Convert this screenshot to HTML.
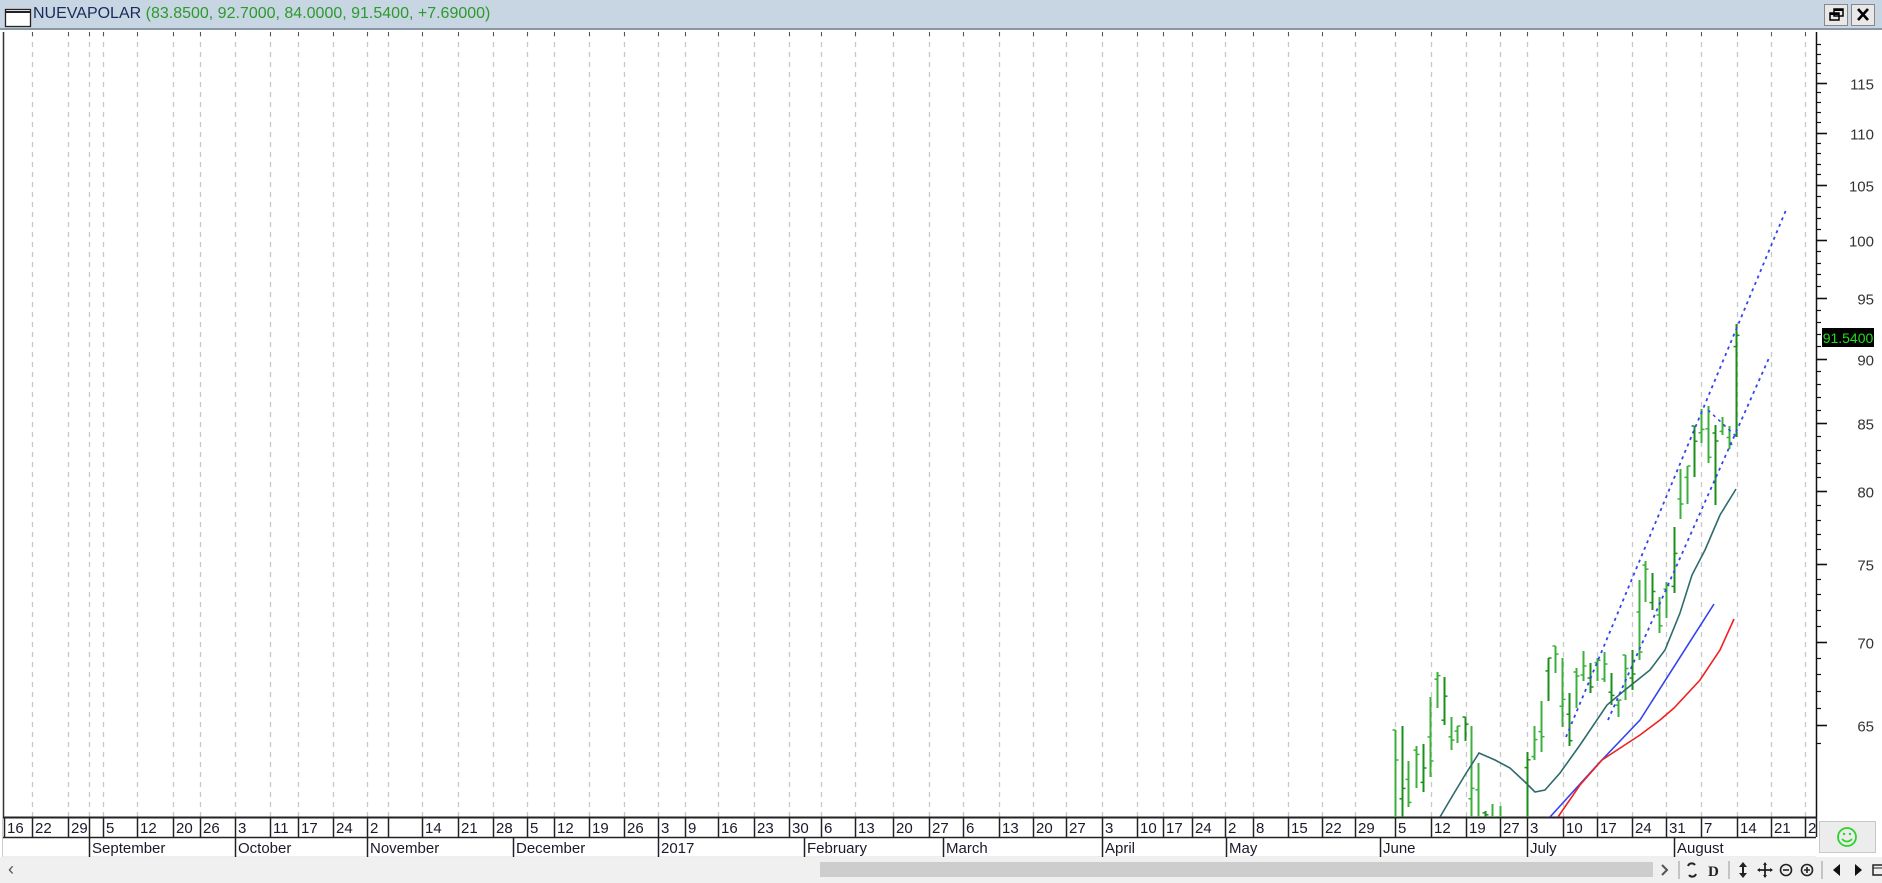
<!DOCTYPE html>
<html><head><meta charset="utf-8">
<style>
html,body{margin:0;padding:0;width:1882px;height:883px;overflow:hidden;background:#fff;font-family:"Liberation Sans",Arial,sans-serif;}
#wrap{position:relative;width:1882px;height:883px;}
#title{position:absolute;left:0;top:0;width:1882px;height:30px;background:#c8d6e3;border-bottom:2px solid #8a98a6;box-sizing:border-box;}
#title .t{position:absolute;left:33px;top:5px;font-size:16px;color:#1a2a5a;white-space:nowrap;}
#title .t span{color:#2a9a2a;}
.btn{position:absolute;top:4px;width:24px;height:22px;background:#e8e8e8;border:1px solid #888;box-sizing:border-box;}
#scroll{position:absolute;left:0;top:857px;width:1882px;height:26px;background:#f0f0f0;}
#smile{position:absolute;left:1819px;top:821px;width:57px;height:32px;background:#ececec;border:1px solid #c8c8c8;box-sizing:border-box;}
</style></head><body><div id="wrap">
<svg id="s" width="1882" height="883" style="position:absolute;left:0;top:0" font-family="Liberation Sans, Arial, sans-serif"></svg>
<div id="title">
<svg width="28" height="24" style="position:absolute;left:4px;top:4px"><rect x="1.5" y="5.5" width="25" height="17" fill="#fff" stroke="#222" stroke-width="1.3"/><line x1="1.5" y1="8" x2="26.5" y2="8" stroke="#222" stroke-width="2"/></svg>
<div class="t">NUEVAPOLAR <span>(83.8500, 92.7000, 84.0000, 91.5400, +7.69000)</span></div>
<div class="btn" style="left:1824px"><svg width="22" height="20"><rect x="5" y="8" width="9" height="7" fill="none" stroke="#000" stroke-width="1.5"/><rect x="9" y="4" width="9" height="7" fill="none" stroke="#000" stroke-width="1.5"/><line x1="9" y1="5" x2="18" y2="5" stroke="#000" stroke-width="2"/><line x1="5" y1="9" x2="14" y2="9" stroke="#000" stroke-width="2"/></svg></div>
<div class="btn" style="left:1851px"><svg width="22" height="20"><path d="M6 4 L16 15 M16 4 L6 15" stroke="#000" stroke-width="2.6"/></svg></div>
</div>
<div id="scroll">
<div style="position:absolute;left:8px;top:2px;font-size:18px;color:#555">‹</div>
<div style="position:absolute;left:820px;top:5px;width:833px;height:15px;background:#cdcdcd"></div>
<svg width="230" height="26" style="position:absolute;left:1652px;top:0">
<path d="M10 8 L15 13 L10 18" fill="none" stroke="#555" stroke-width="2"/>
<line x1="27" y1="4" x2="27" y2="22" stroke="#999"/>
<path d="M36 9 a4 4 0 0 1 7 -1 M44 17 a4 4 0 0 1 -7 1" fill="none" stroke="#222" stroke-width="2"/>
<text x="56" y="19" font-size="15" font-weight="bold" fill="#222" font-family="Liberation Serif, serif">D</text>
<line x1="77" y1="4" x2="77" y2="22" stroke="#999"/>
<path d="M91 5 L95 10 L87 10 Z M91 21 L95 16 L87 16 Z M90 10 h2 v6 h-2z" fill="#222"/>
<path d="M113 6 v14 M106 13 h14" stroke="#222" stroke-width="1.8"/><path d="M113 5 l-2 3 h4z M113 21 l-2 -3 h4z M105 13 l3 -2 v4z M121 13 l-3 -2 v4z" fill="#222"/>
<circle cx="134" cy="13" r="5.5" fill="none" stroke="#222" stroke-width="1.6"/><line x1="131" y1="13" x2="137" y2="13" stroke="#222" stroke-width="1.6"/>
<circle cx="155" cy="13" r="5.5" fill="none" stroke="#222" stroke-width="1.6"/><path d="M152 13 h6 M155 10 v6" stroke="#222" stroke-width="1.6"/>
<line x1="170" y1="4" x2="170" y2="22" stroke="#999"/>
<path d="M188 7 L181 13 L188 19 Z" fill="#111"/><path d="M203 7 L210 13 L203 19 Z" fill="#111"/>
<rect x="221" y="8" width="10" height="10" fill="none" stroke="#222" stroke-width="1.5"/><line x1="221" y1="11" x2="231" y2="11" stroke="#222"/>
</svg>
</div>
<div id="smile"><svg width="55" height="30"><circle cx="27" cy="15" r="9" fill="none" stroke="#2ad42a" stroke-width="1.8"/><circle cx="24" cy="12" r="1.2" fill="#2ad42a"/><circle cx="30" cy="12" r="1.2" fill="#2ad42a"/><path d="M22 17 q5 5 10 0" fill="none" stroke="#2ad42a" stroke-width="1.6"/></svg></div>
</div>
<script>
var s='';
function L(x1,y1,x2,y2,c,w,d){s+='<line x1="'+x1+'" y1="'+y1+'" x2="'+x2+'" y2="'+y2+'" stroke="'+c+'" stroke-width="'+(w||1)+'"'+(d?' stroke-dasharray="'+d+'"':'')+'/>';}
function T(x,y,t,c,sz,a){s+='<text x="'+x+'" y="'+y+'" font-size="'+(sz||15)+'" fill="'+(c||'#222')+'"'+(a?' text-anchor="'+a+'"':'')+'>'+t+'</text>';}
function Y(p){return 240+1126*(Math.log(100)-Math.log(p));}
var AX=1816,TOP=32,BOT=817;
// dates
var d=[[4,'16'],[32,'22'],[68,'29'],[89,''],[103,'5'],[137,'12'],[173,'20'],[200,'26'],[235,'3'],[270,'11'],[298,'17'],[333,'24'],[367,'2'],[388,''],[422,'14'],[458,'21'],[493,'28'],[527,'5'],[554,'12'],[589,'19'],[624,'26'],[658,'3'],[685,'9'],[718,'16'],[754,'23'],[789,'30'],[821,'6'],[855,'13'],[893,'20'],[929,'27'],[963,'6'],[999,'13'],[1033,'20'],[1066,'27'],[1102,'3'],[1137,'10'],[1163,'17'],[1192,'24'],[1225,'2'],[1253,'8'],[1288,'15'],[1322,'22'],[1355,'29'],[1395,'5'],[1431,'12'],[1466,'19'],[1500,'27'],[1527,'3'],[1563,'10'],[1597,'17'],[1632,'24'],[1666,'31'],[1701,'7'],[1737,'14'],[1771,'21'],[1805,'2']];
for(var i=1;i<d.length;i++){L(d[i][0]+.5,TOP,d[i][0]+.5,BOT,'#c8c8c8',1.3,'5,5');L(d[i][0]+.5,TOP,d[i][0]+.5,TOP+4,'#555',1);}
L(3.5,TOP,3.5,857,'#333',1.5);
// axis
L(AX+.5,TOP,AX+.5,BOT,'#111',1.5);
for(var p=64;p<=119;p++){var y=Math.round(Y(p))+.5;var maj=p%5==0;L(AX,y,AX+(maj?11:5),y,'#111',maj?1.6:1.2);if(maj&&p<=115)T(1874,y+6,p,'#333',15,'end');}
// date row
s+='<rect x="3" y="817" width="1813" height="40" fill="#fff"/>';
L(3,817.5,AX+1,817.5,'#222',2);L(3,837.5,AX,837.5,'#222',1.5);L(3,857,AX,857,'#ddd',1);
for(var i=0;i<d.length;i++){L(d[i][0]+.5,817,d[i][0]+.5,837,'#222',1.5);T(d[i][0]+3,833,d[i][1],'#1a1a2a',15);}
L(AX+.5,817,AX+.5,837,'#222',1.5);
var m=[[89,'September'],[235,'October'],[367,'November'],[513,'December'],[658,'2017'],[804,'February'],[943,'March'],[1102,'April'],[1226,'May'],[1380,'June'],[1527,'July'],[1674,'August']];
for(var i=0;i<m.length;i++){L(m[i][0]+.5,837,m[i][0]+.5,857,'#222',1.5);T(m[i][0]+3,853,m[i][1],'#1a1a2a',15);}
// bars
s+='<svg x="0" y="0" width="1816" height="817">';
var b=[[1395,730,830],[1402,726,830],[1408,761,807],[1416,746,788],[1423,744,792],[1430,697,777],[1437,672,708],[1444,677,725],[1451,717,750],[1457,726,743],[1465,717,741],[1471,726,830],[1478,763,830],[1485,811,830],[1492,804,830],[1500,806,830],[1527,752,830],[1534,726,760],[1541,701,752],[1548,658,701],[1555,646,673],[1562,658,727],[1569,693,746],[1576,668,708],[1583,651,681],[1590,663,693],[1597,658,681],[1604,652,682],[1611,673,705],[1618,700,717],[1625,655,700],[1632,650,690],[1639,580,660],[1645,561,602],[1652,573,610],[1659,597,633],[1666,582,618],[1674,527,593],[1680,469,519],[1687,466,504],[1694,426,477],[1701,409,443],[1708,406,463],[1715,425,505],[1722,417,435],[1729,426,449],[1736,324,437]];
for(var i=0;i<b.length;i++){var x=b[i][0]+.5,h=b[i][1],l=b[i][2];var c=i%3==1?'#1a8f1a':'#3cb03c';L(x,h,x,l,c,2);var o=h+(l-h)*((i*37)%10)/10,cl=h+(l-h)*((i*53+3)%10)/10;L(x-3,o,x,o,c,1.5);L(x,cl,x+3,cl,c,1.5);}
function P(pts,c,w,da){s+='<polyline points="'+pts+'" fill="none" stroke="'+c+'" stroke-width="'+w+'"'+(da?' stroke-dasharray="'+da+'"':'')+'/>';}
P('1440,817 1450,800 1465,775 1479,753 1495,760 1510,768 1525,782 1535,792 1545,790 1560,773 1580,745 1607,705 1625,690 1640,678 1650,670 1665,650 1680,613 1692,575 1705,550 1720,515 1736,489','#2f6b6b',1.6);
P('1550,817 1600,762 1640,720 1714,604','#3344ee',1.6);
P('1558,817 1580,785 1602,760 1640,735 1660,720 1674,708 1700,680 1720,650 1734,619','#ee2222',1.6);
P('1566,737 1786,210','#3344ee',1.8,'3,4');
P('1608,720 1769,358','#3344ee',1.8,'3,4');
P('1708,410 1738,438','#3344ee',1.5,'3,4');
s+='</svg>';
// price label
s+='<rect x="1822" y="328" width="52" height="19" fill="#000"/>';T(1848,343,'91.5400','#22dd22',14,'middle');
document.getElementById('s').innerHTML=s;
</script>
</body></html>
